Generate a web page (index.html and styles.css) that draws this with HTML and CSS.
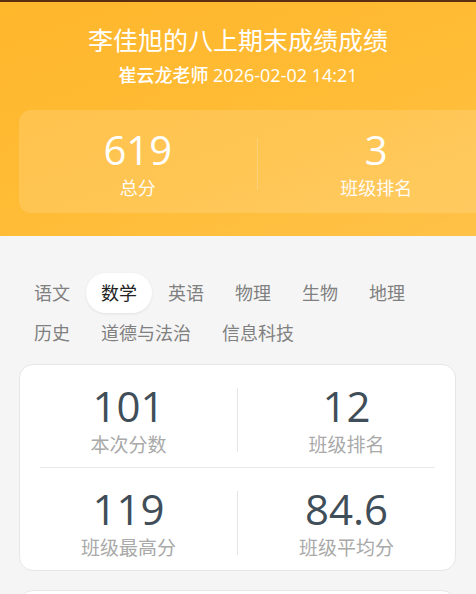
FILE: index.html
```html
<!DOCTYPE html>
<html lang="zh-CN">
<head>
  <meta charset="UTF-8" />
  <meta name="viewport" content="width=device-width, initial-scale=1.0"/>
  <title>李佳旭的八上期末成绩成绩</title>
  <link rel="stylesheet" href="styles.css">
</head>
<body>
  <div class="header">
    <h1 class="title">李佳旭的八上期末成绩成绩</h1>
    <div class="subtitle">崔云龙老师 2026-02-02 14:21</div>
    <div class="stats">
      <div class="stat">
        <div class="stat-num">619</div>
        <div class="stat-label">总分</div>
      </div>
      <div class="stat-line"></div>
      <div class="stat">
        <div class="stat-num">3</div>
        <div class="stat-label">班级排名</div>
      </div>
    </div>
  </div>

  <div class="tabs">
    <span class="tab">语文</span>
    <span class="tab active">数学</span>
    <span class="tab">英语</span>
    <span class="tab">物理</span>
    <span class="tab">生物</span>
    <span class="tab">地理</span>
    <span class="tab">历史</span>
    <span class="tab">道德与法治</span>
    <span class="tab">信息科技</span>
  </div>

  <div class="card">
    <div class="row">
      <div class="cell">
        <div class="num">101</div>
        <div class="label">本次分数</div>
      </div>
      <div class="vline"></div>
      <div class="cell">
        <div class="num">12</div>
        <div class="label">班级排名</div>
      </div>
    </div>
    <div class="row">
      <div class="cell">
        <div class="num">119</div>
        <div class="label">班级最高分</div>
      </div>
      <div class="vline"></div>
      <div class="cell">
        <div class="num">84.6</div>
        <div class="label">班级平均分</div>
      </div>
    </div>
  </div>

  <div class="card next"></div>
</body>
</html>
```

FILE: styles.css
```css
body {
  margin: 0;
  background-color: #f5f5f5;
  font-family: "Open Sans", "Noto Sans CJK SC", sans-serif;
  overflow: hidden;
}
.header {
  border-top: 2px solid #5c2e12;
  background: linear-gradient(160deg, #ffb72c 0%, #ffbc36 55%, #ffc248 100%);
  padding: 20px 0 23px;
  color: white;
  overflow: hidden;
}
.title {
  margin: 0;
  text-align: center;
  font-size: 25px;
  font-weight: 400;
  line-height: 36px;
}
.subtitle {
  margin-top: 5px;
  text-align: center;
  font-size: 18px;
  font-weight: 500;
  line-height: 25px;
}
.stats {
  display: flex;
  align-items: center;
  margin: 22px 0 0 19px;
  width: 476px;
  padding: 16px 0 11px;
  border-radius: 12px;
  background-color: rgba(255, 255, 255, 0.14);
}
.stat {
  flex: 1;
  text-align: center;
}
.stat-num {
  font-size: 40px;
  line-height: 48px;
}
.stat-label {
  font-size: 18px;
  line-height: 28px;
  opacity: 0.95;
}
.stat-line {
  width: 1px;
  height: 52px;
  background-color: rgba(255, 255, 255, 0.22);
}
.tabs {
  display: flex;
  flex-wrap: wrap;
  gap: 0 1px;
  padding: 37px 19px 0;
}
.tab {
  padding: 0 15px;
  height: 40px;
  line-height: 40px;
  font-size: 18px;
  color: #808080;
  border-radius: 20px;
}
.tab.active {
  background-color: white;
  color: #222;
  box-shadow: 0 1px 3px rgba(0, 0, 0, 0.08);
}
.card {
  margin: 11px 20px 19px 19px;
  background-color: white;
  border: 1px solid #e6e6e6;
  border-radius: 14px;
}
.row {
  display: flex;
  align-items: center;
  padding: 16px 0 8px;
}
.row + .row {
  border-top: 1px solid #e8e8e8;
  margin: 0 20px;
}
.row + .row .cell:first-child {
  margin-left: -20px;
}
.row + .row .cell:last-child {
  margin-right: -20px;
}
.cell {
  flex: 1;
  text-align: center;
}
.vline {
  width: 1px;
  height: 64px;
  background-color: #e6e6e6;
}
.num {
  font-size: 42px;
  line-height: 50px;
  color: #3f4e58;
}
.label {
  font-size: 19px;
  line-height: 28px;
  color: #a9a9a9;
}
.next {
  height: 40px;
  margin-top: 0;
}
```
